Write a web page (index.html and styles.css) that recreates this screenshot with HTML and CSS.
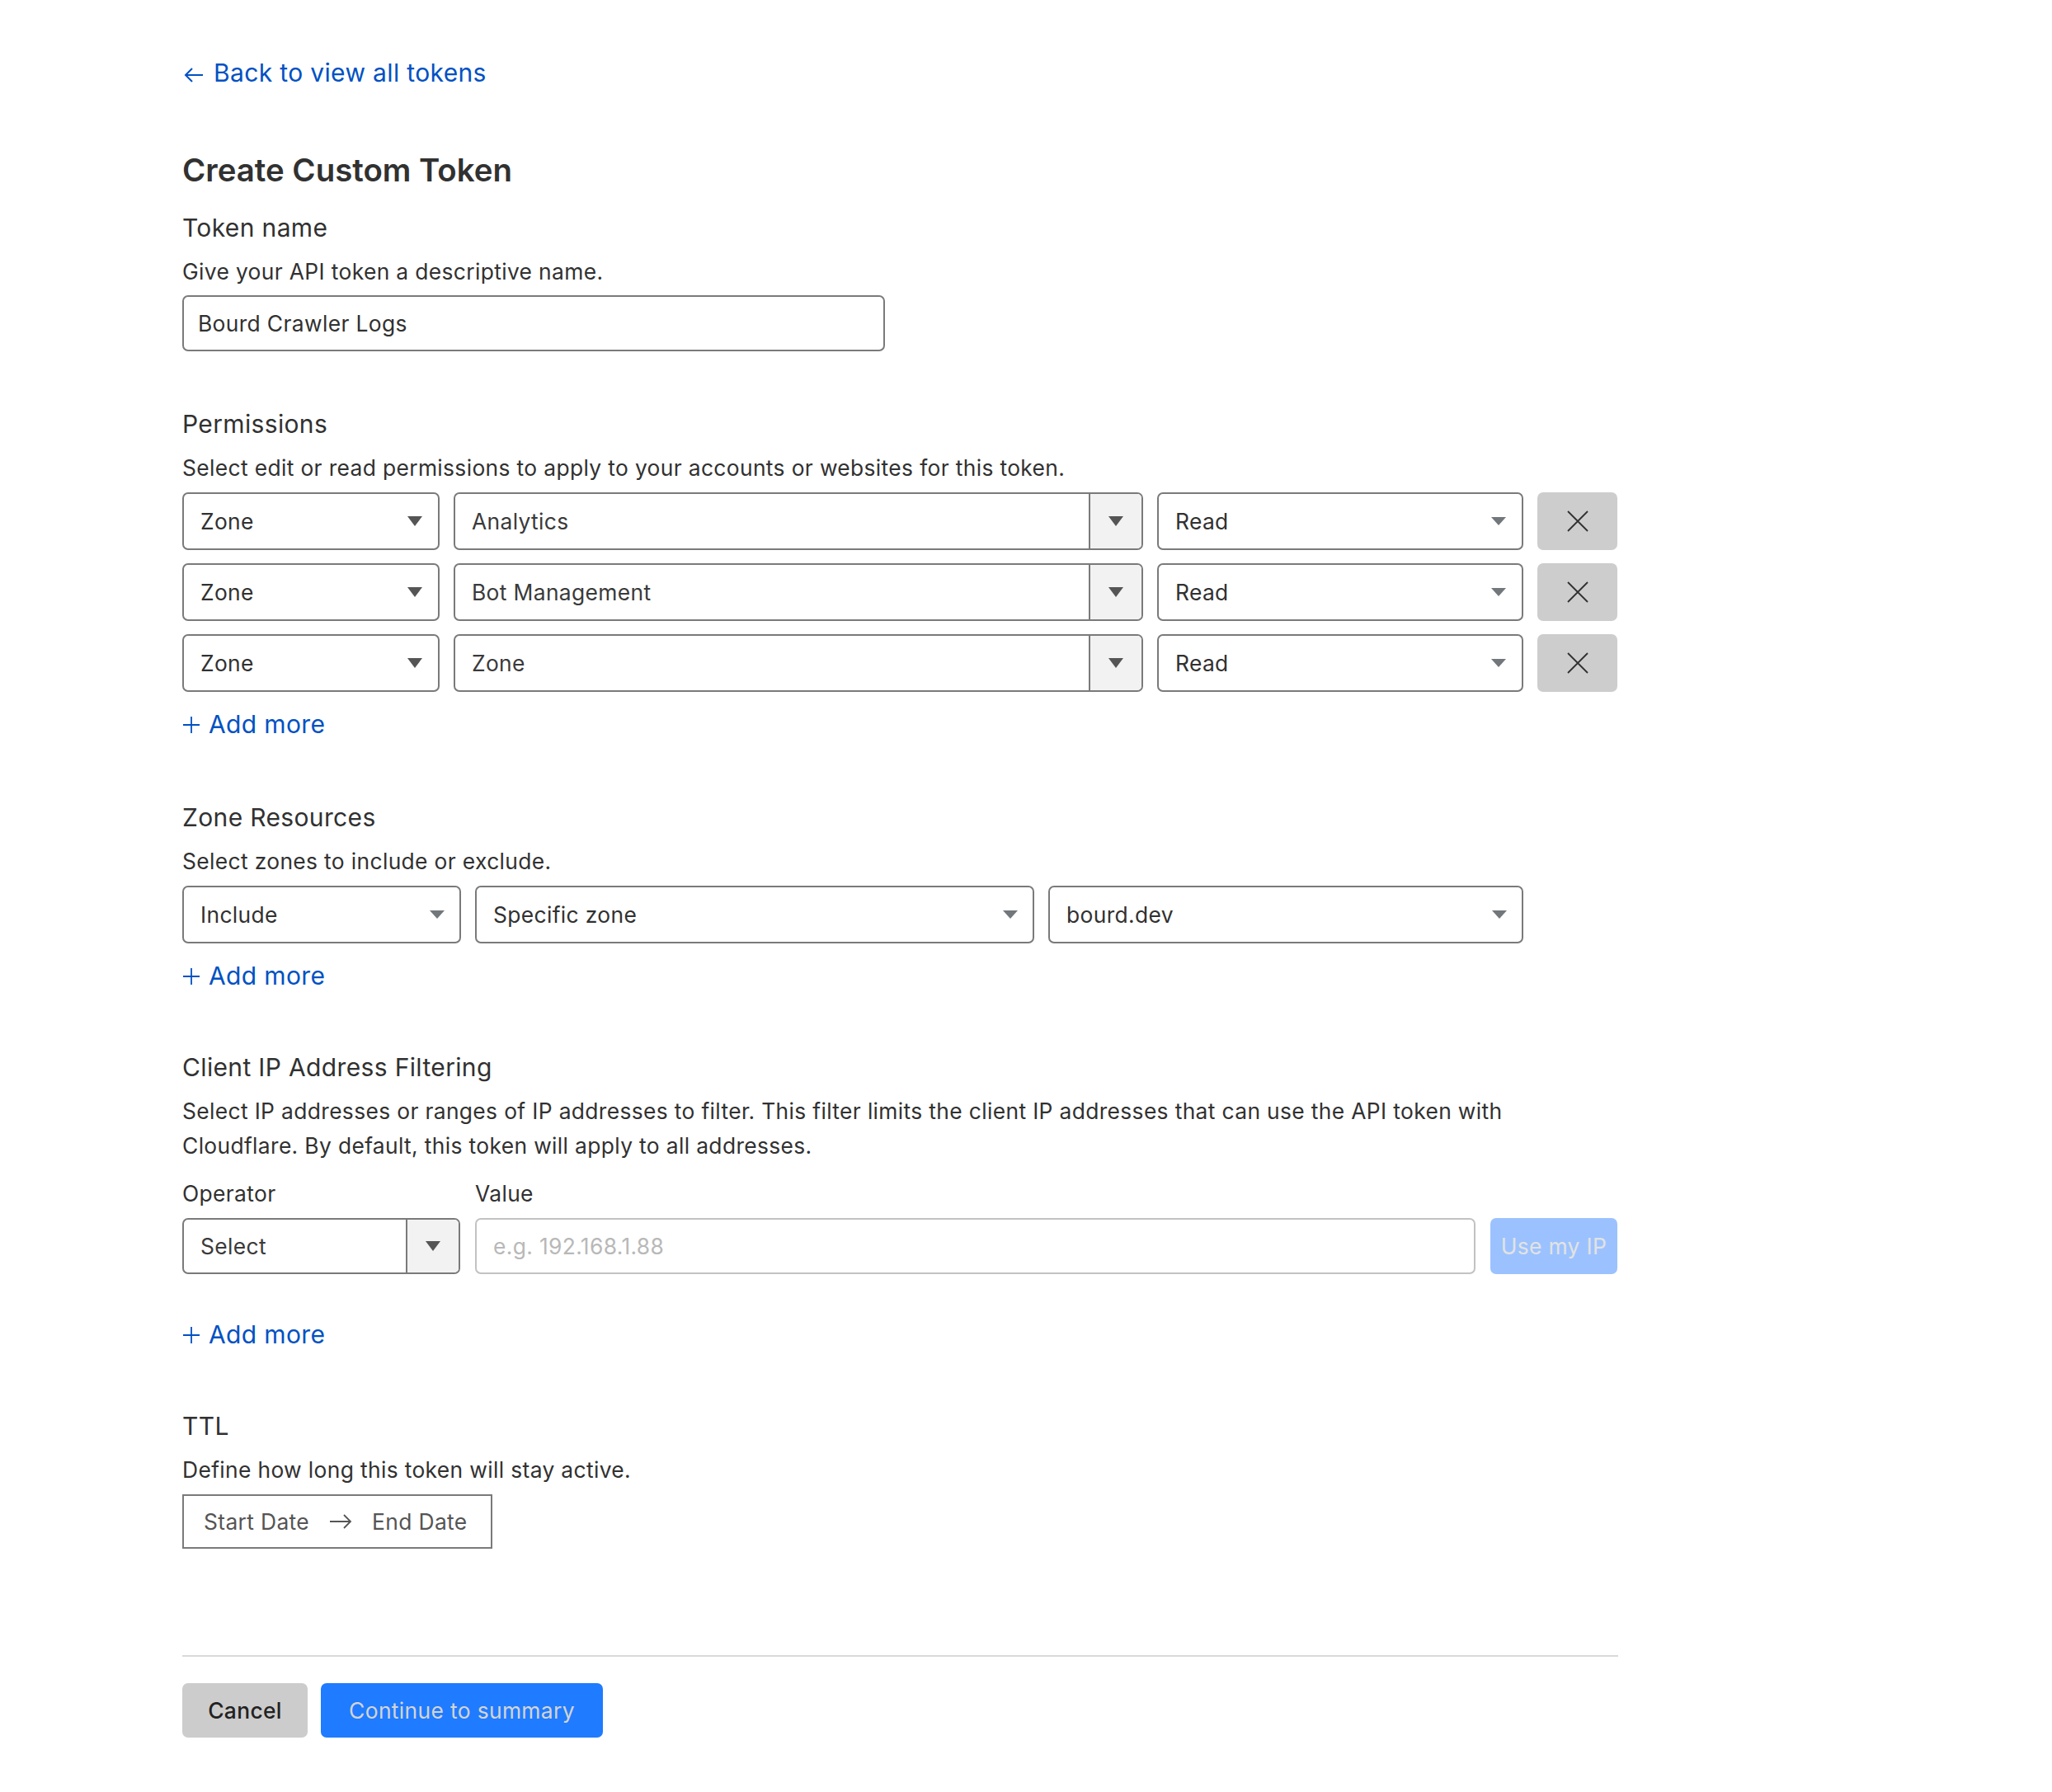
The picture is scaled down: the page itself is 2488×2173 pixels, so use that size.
FILE: index.html
```html
<!DOCTYPE html>
<html lang="en">
<head>
<meta charset="utf-8">
<title>Create Custom Token</title>
<link rel="stylesheet" href="styles.css">
</head>
<body>
<main class="page">
  <a class="back" href="#">
    <svg class="back-arrow" viewBox="0 0 28 28" width="28" height="28"><path d="M25 15H4M12 7l-8 8 8 8" fill="none" stroke="#0051c3" stroke-width="2"/></svg>
    <span>Back to view all tokens</span>
  </a>

  <h1 class="title">Create Custom Token</h1>

  <section class="sec sec-first">
    <h2 class="sec-title">Token name</h2>
    <p class="desc">Give your API token a descriptive name.</p>
    <div class="field field-name">Bourd Crawler Logs</div>
  </section>

  <section class="sec sec-perm">
    <h2 class="sec-title">Permissions</h2>
    <p class="desc">Select edit or read permissions to apply to your accounts or websites for this token.</p>
    <div class="perm-rows">
      <div class="perm-row">
        <div class="select"><span>Zone</span><i class="caret caret-dark"></i></div>
        <div class="combo"><span class="combo-text">Analytics</span><span class="combo-btn"><i class="caret caret-dark"></i></span></div>
        <div class="select"><span>Read</span><i class="caret"></i></div>
        <button class="remove" type="button"><svg viewBox="0 0 26 26" width="26" height="26"><path d="M1 1L25 25M25 1L1 25" stroke="#313131" stroke-width="1.8" fill="none"/></svg></button>
      </div>
      <div class="perm-row">
        <div class="select"><span>Zone</span><i class="caret caret-dark"></i></div>
        <div class="combo"><span class="combo-text">Bot Management</span><span class="combo-btn"><i class="caret caret-dark"></i></span></div>
        <div class="select"><span>Read</span><i class="caret"></i></div>
        <button class="remove" type="button"><svg viewBox="0 0 26 26" width="26" height="26"><path d="M1 1L25 25M25 1L1 25" stroke="#313131" stroke-width="1.8" fill="none"/></svg></button>
      </div>
      <div class="perm-row">
        <div class="select"><span>Zone</span><i class="caret caret-dark"></i></div>
        <div class="combo"><span class="combo-text">Zone</span><span class="combo-btn"><i class="caret caret-dark"></i></span></div>
        <div class="select"><span>Read</span><i class="caret"></i></div>
        <button class="remove" type="button"><svg viewBox="0 0 26 26" width="26" height="26"><path d="M1 1L25 25M25 1L1 25" stroke="#313131" stroke-width="1.8" fill="none"/></svg></button>
      </div>
    </div>
    <a class="add-more" href="#"><svg viewBox="0 0 22 22" width="22" height="22"><path d="M11 1V21M1 11H21" stroke="#0051c3" stroke-width="1.8" fill="none"/></svg><span>Add more</span></a>
  </section>

  <section class="sec sec-zone">
    <h2 class="sec-title">Zone Resources</h2>
    <p class="desc">Select zones to include or exclude.</p>
    <div class="zone-row">
      <div class="select"><span>Include</span><i class="caret"></i></div>
      <div class="select"><span>Specific zone</span><i class="caret"></i></div>
      <div class="select"><span>bourd.dev</span><i class="caret"></i></div>
    </div>
    <a class="add-more" href="#"><svg viewBox="0 0 22 22" width="22" height="22"><path d="M11 1V21M1 11H21" stroke="#0051c3" stroke-width="1.8" fill="none"/></svg><span>Add more</span></a>
  </section>

  <section class="sec">
    <h2 class="sec-title">Client IP Address Filtering</h2>
    <p class="desc">Select IP addresses or ranges of IP addresses to filter. This filter limits the client IP addresses that can use the API token with Cloudflare. By default, this token will apply to all addresses.</p>
    <div class="ip-grid">
      <label class="ip-label">Operator</label>
      <label class="ip-label">Value</label>
      <span></span>
      <div class="combo combo-op"><span class="combo-text">Select</span><span class="combo-btn"><i class="caret caret-dark"></i></span></div>
      <div class="field field-value">e.g. 192.168.1.88</div>
      <button class="btn-ip" type="button">Use my IP</button>
    </div>
    <a class="add-more add-more-ip" href="#"><svg viewBox="0 0 22 22" width="22" height="22"><path d="M11 1V21M1 11H21" stroke="#0051c3" stroke-width="1.8" fill="none"/></svg><span>Add more</span></a>
  </section>

  <section class="sec">
    <h2 class="sec-title">TTL</h2>
    <p class="desc">Define how long this token will stay active.</p>
    <div class="date-range">
      <span>Start Date</span>
      <svg viewBox="0 0 28 20" width="28" height="20"><path d="M1 10H26M18 2l8 8-8 8" fill="none" stroke="#555" stroke-width="1.8"/></svg>
      <span>End Date</span>
    </div>
  </section>

  <hr class="divider">

  <div class="actions">
    <button class="btn btn-cancel" type="button">Cancel</button>
    <button class="btn btn-primary" type="button">Continue to summary</button>
  </div>
</main>
</body>
</html>
```

FILE: styles.css
```css
* { box-sizing: border-box; }

html, body {
  margin: 0;
  padding: 0;
  background: #ffffff;
}

body {
  font-family: Inter, "Noto Sans", "Liberation Sans", sans-serif;
  font-size: 26.4px;
  letter-spacing: 0.35px;
  color: #313131;
}

.page {
  width: 1962px;
  padding: 68px 0 60px 221px;
}

.back {
  display: flex;
  align-items: center;
  gap: 10px;
  width: max-content;
  height: 40px;
  font-size: 30px;
  line-height: 40px;
  color: #0051c3;
  text-decoration: none;
}

.back-arrow { flex: none; margin-top: 4px; }

.title {
  margin: 74px 0 0 0;
  font-size: 38.4px;
  line-height: 48px;
  font-weight: 600;
  letter-spacing: 0;
  color: #313131;
}

.sec { margin-top: 71px; }
.sec-first { margin-top: 26px; }
.sec-perm { margin-top: 68px; }
.sec-zone { margin-top: 73px; }

.sec-title {
  margin: 0;
  font-size: 30px;
  line-height: 40px;
  font-weight: 400;
  color: #313131;
}

.desc {
  margin: 12px 0 0 0;
  line-height: 42px;
  color: #313131;
}

.field {
  display: flex;
  align-items: center;
  height: 68px;
  margin-top: 8px;
  padding: 0 17px;
  border: 2px solid #7a7a7a;
  border-radius: 7px;
  color: #313131;
}

.field-name { width: 852px; }

.perm-rows {
  display: flex;
  flex-direction: column;
  gap: 16px;
  margin-top: 9px;
}

.perm-row {
  display: grid;
  grid-template-columns: 312px 836px 444px 97px;
  column-gap: 17px;
  height: 70px;
}

.select {
  display: flex;
  align-items: center;
  justify-content: space-between;
  height: 70px;
  padding: 0 19px 0 20px;
  border: 2px solid #7a7a7a;
  border-radius: 7px;
  background: #ffffff;
}

.caret {
  display: block;
  width: 0;
  height: 0;
  border-left: 9px solid transparent;
  border-right: 9px solid transparent;
  border-top: 10px solid #72777b;
}

.caret-dark { border-top-color: #555555; border-top-width: 12px; }

.combo {
  display: flex;
  height: 70px;
  border: 2px solid #7a7a7a;
  border-radius: 7px;
  overflow: hidden;
}

.combo-text {
  flex: 1;
  display: flex;
  align-items: center;
  padding-left: 20px;
  color: #3a3a3a;
}

.combo-btn {
  flex: none;
  width: 64px;
  display: flex;
  align-items: center;
  justify-content: center;
  border-left: 2px solid #7a7a7a;
  background: #f2f2f2;
}

.remove {
  display: flex;
  align-items: center;
  justify-content: center;
  height: 70px;
  padding: 0;
  border: none;
  border-radius: 7px;
  background: #cdcdcd;
}

.add-more {
  display: flex;
  align-items: center;
  gap: 10px;
  width: max-content;
  height: 40px;
  margin-top: 19px;
  font-size: 30px;
  line-height: 40px;
  color: #0051c3;
  text-decoration: none;
}

.add-more svg { flex: none; margin-top: 2px; }

.add-more-ip { margin-top: 53px; }

.zone-row {
  display: grid;
  grid-template-columns: 338px 678px 576px;
  column-gap: 17px;
  margin-top: 9px;
}

.zone-row .select { padding-right: 18px; }

.ip-grid {
  display: grid;
  grid-template-columns: 337px 1213px 154px;
  column-gap: 18px;
  grid-template-rows: 40px 68px;
  row-gap: 10px;
  margin-top: 17px;
}

.ip-label {
  line-height: 40px;
  color: #313131;
}

.combo-op { height: 68px; }

.field-value {
  margin-top: 0;
  padding: 0 20px;
  border-color: #c2c2c2;
  color: #b8b8b8;
}

.btn-ip {
  height: 68px;
  padding: 0;
  border: none;
  border-radius: 7px;
  background: #9bc2ff;
  color: #e2e2e2;
  font-family: inherit;
  font-size: 26.4px;
  letter-spacing: 0.35px;
}

.date-range {
  display: flex;
  align-items: center;
  gap: 24px;
  width: 376px;
  height: 66px;
  margin-top: 9px;
  padding: 0 24px;
  border: 2px solid #7a7a7a;
  color: #555555;
  white-space: nowrap;
}

.date-range svg { flex: none; }

.divider {
  width: 1741px;
  height: 0;
  margin: 129px 0 0 0;
  border: none;
  border-top: 2px solid #d9d9d9;
}

.actions {
  display: flex;
  gap: 16px;
  margin-top: 32px;
}

.btn {
  height: 66px;
  padding: 0;
  border: none;
  border-radius: 7px;
  font-family: inherit;
  font-size: 26.4px;
  letter-spacing: 0.35px;
  font-weight: 500;
}

.btn-cancel {
  width: 152px;
  background: #cccccc;
  color: #222222;
}

.btn-primary {
  width: 342px;
  background: #1f7bff;
  color: #d4d4d4;
  font-weight: 400;
}
```
